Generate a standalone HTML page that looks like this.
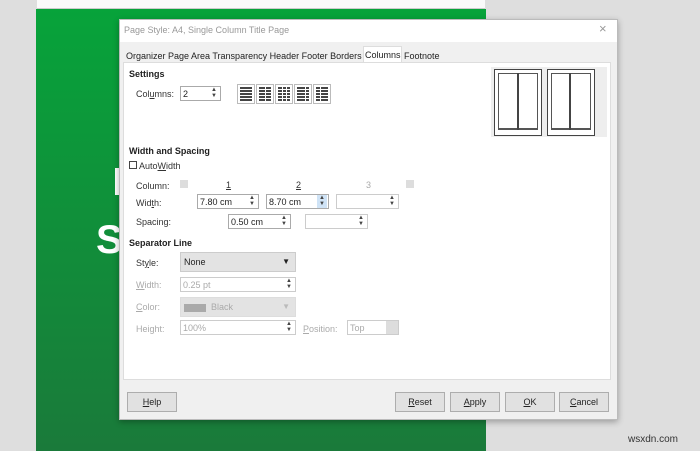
<!DOCTYPE html>
<html><head><meta charset="utf-8"><style>
*{box-sizing:border-box;margin:0;padding:0}
body{width:700px;height:451px;overflow:hidden;background:#dedede;font-family:"Liberation Sans",sans-serif;font-size:9px;color:#222;position:relative}
.a{position:absolute}
.lbl{position:absolute;font-size:9px;color:#333}
.dis{color:#aaa}
.b{font-weight:bold;font-size:9px;color:#222}
.in{position:absolute;background:#fff;border:1px solid #aaa;height:15px;font-size:9px;padding:2px 0 0 2px}
.in.d{border-color:#ccc;color:#aaa}
.spin{position:absolute;width:10px;height:13px;top:0;right:1px;font-size:6px;color:#444;text-align:center;line-height:6px}
.btn{position:absolute;top:392px;height:20px;background:#e1e1e1;border:1px solid #adadad;font-size:9px;text-align:center;line-height:18px;color:#222}
.sel{position:absolute;height:20px;background:#e3e3e3;border:1px solid #ccc;font-size:9px;padding:4px 0 0 3px}
.ic{position:absolute;top:84px;width:18px;height:20px;border:1px solid #bbb;background:#fff;padding:2px}
.ic i{display:block;width:100%;height:100%;background:repeating-linear-gradient(#444 0 2px,#fff 2px 3px);position:relative}
.ic b{position:absolute;top:0;width:1px;height:100%;background:#fff}
u{text-decoration:underline}
</style></head><body>
<div class="a" style="left:37px;top:0;width:448px;height:9px;background:#fafafa;border-bottom:1px solid #ccc"></div>
<div class="a" style="left:36px;top:9px;width:450px;height:442px;background:linear-gradient(#07a33a,#1a7a3a)"></div>
<div class="a" style="left:115px;top:168px;width:4px;height:27px;background:#fff"></div>
<div class="a" style="left:96px;top:216px;color:#fff;font-weight:bold;font-size:40px;line-height:48px">S</div>
<div class="a" style="left:119px;top:19px;width:499px;height:401px;background:#f0f0f0;border:1px solid #bbb;box-shadow:0 2px 6px rgba(0,0,0,.3)"></div>
<div class="a" style="left:120px;top:20px;width:497px;height:22px;background:#fff"></div>
<div class="lbl" style="left:124px;top:25px;color:#999">Page Style: A4, Single Column Title Page</div>
<div class="lbl" style="left:599px;top:21px;color:#999;font-size:13px">×</div>
<div class="lbl" style="left:126px;top:51px;color:#222">Organizer Page Area Transparency Header Footer Borders</div>
<div class="a" style="left:363px;top:46px;width:39px;height:17px;background:#fff;border:1px solid #ddd;border-bottom:none"></div>
<div class="lbl" style="left:365px;top:50px;color:#222">Columns</div>
<div class="lbl" style="left:404px;top:51px;color:#222">Footnote</div>
<div class="a" style="left:123px;top:62px;width:488px;height:318px;background:#fff;border:1px solid #ddd"></div>
<div class="a b" style="left:129px;top:69px">Settings</div>
<div class="lbl" style="left:136px;top:89px">Col<u>u</u>mns:</div>
<div class="in" style="left:180px;top:86px;width:41px">2<div class="spin">▲<br>▼</div></div>
<div class="ic" style="left:237px"><i></i></div>
<div class="ic" style="left:256px"><i><b style="left:6px"></b></i></div>
<div class="ic" style="left:275px"><i><b style="left:4px"></b><b style="left:8px"></b></i></div>
<div class="ic" style="left:294px"><i><b style="left:8px"></b></i></div>
<div class="ic" style="left:313px"><i><b style="left:4px"></b></i></div>
<div class="a" style="left:491px;top:67px;width:116px;height:70px;background:#eee"></div>
<div class="a" style="left:494px;top:69px;width:48px;height:67px;background:#fff;border:1px solid #444"></div>
<div class="a" style="left:498px;top:73px;width:40px;height:57px;border:1px solid #555;border-bottom:2px solid #555"></div>
<div class="a" style="left:517px;top:73px;width:2px;height:57px;background:#444"></div>
<div class="a" style="left:547px;top:69px;width:48px;height:67px;background:#fff;border:1px solid #444"></div>
<div class="a" style="left:551px;top:73px;width:40px;height:57px;border:1px solid #555;border-bottom:2px solid #555"></div>
<div class="a" style="left:569px;top:73px;width:2px;height:57px;background:#444"></div>
<div class="a b" style="left:129px;top:146px">Width and Spacing</div>
<div class="a" style="left:129px;top:161px;width:8px;height:8px;border:1px solid #444;background:#fff"></div>
<div class="lbl" style="left:139px;top:161px">Auto<u>W</u>idth</div>
<div class="lbl" style="left:136px;top:181px">Column:</div>
<div class="a" style="left:180px;top:180px;width:8px;height:8px;background:#ddd"></div>
<div class="a" style="left:406px;top:180px;width:8px;height:8px;background:#ddd"></div>
<div class="lbl" style="left:226px;top:180px"><u>1</u></div>
<div class="lbl" style="left:296px;top:180px"><u>2</u></div>
<div class="lbl dis" style="left:366px;top:180px">3</div>
<div class="lbl" style="left:136px;top:198px">Wid<u>t</u>h:</div>
<div class="in" style="left:197px;top:194px;width:62px">7.80 cm<div class="spin">▲<br>▼</div></div>
<div class="in" style="left:266px;top:194px;width:63px">8.70 cm<div class="spin" style="background:#cfe3f6">▲<br>▼</div></div>
<div class="in d" style="left:336px;top:194px;width:63px"><div class="spin">▲<br>▼</div></div>
<div class="lbl" style="left:136px;top:217px">Spacing:</div>
<div class="in" style="left:228px;top:214px;width:63px">0.50 cm<div class="spin">▲<br>▼</div></div>
<div class="in d" style="left:305px;top:214px;width:63px"><div class="spin">▲<br>▼</div></div>
<div class="a b" style="left:129px;top:238px">Separator Line</div>
<div class="lbl" style="left:136px;top:258px">St<u>y</u>le:</div>
<div class="sel" style="left:180px;top:252px;width:116px;color:#222">None<span class="a" style="right:5px;top:4px;font-size:8px">▼</span></div>
<div class="lbl dis" style="left:136px;top:280px"><u>W</u>idth:</div>
<div class="in d" style="left:180px;top:277px;width:116px">0.25 pt<div class="spin">▲<br>▼</div></div>
<div class="lbl dis" style="left:136px;top:302px"><u>C</u>olor:</div>
<div class="sel" style="left:180px;top:297px;width:116px;color:#aaa;border-color:#ddd"><span style="display:inline-block;width:22px;height:8px;background:#aaa;vertical-align:middle;margin-right:5px"></span>Black<span class="a" style="right:5px;top:4px;font-size:8px;color:#bbb">▼</span></div>
<div class="lbl dis" style="left:136px;top:324px">Hei<u>g</u>ht:</div>
<div class="in d" style="left:180px;top:320px;width:116px">100%<div class="spin">▲<br>▼</div></div>
<div class="lbl dis" style="left:303px;top:324px"><u>P</u>osition:</div>
<div class="in d" style="left:347px;top:320px;width:52px">Top<div class="a" style="right:0;top:0;width:12px;height:13px;background:#ddd"></div></div>
<div class="btn" style="left:127px;width:50px"><u>H</u>elp</div>
<div class="btn" style="left:395px;width:50px"><u>R</u>eset</div>
<div class="btn" style="left:450px;width:50px"><u>A</u>pply</div>
<div class="btn" style="left:505px;width:50px"><u>O</u>K</div>
<div class="btn" style="left:559px;width:50px"><u>C</u>ancel</div>
<div class="lbl" style="left:628px;top:434px;font-size:10px;color:#333">wsxdn.com</div>
</body></html>
